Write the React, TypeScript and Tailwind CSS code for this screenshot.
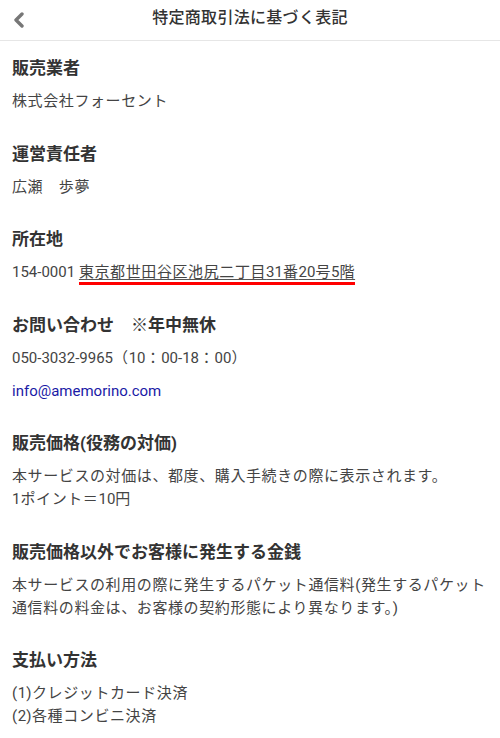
import React from 'react';

type Section = {
  title: string;
  lines: React.ReactNode[];
};

// latin runs keep normal tracking, CJK text is a touch wider in the reference
const L = ({ children }: { children: React.ReactNode }) => <span className="tracking-normal">{children}</span>;

const sections: Section[] = [
  { title: '販売業者', lines: ['株式会社フォーセント'] },
  { title: '運営責任者', lines: ['広瀬\u3000歩夢'] },
  {
    title: '所在地',
    lines: [
      <>
        <L>154-0001 </L>
        <span className="underline decoration-[#555] underline-offset-[2px] border-b-[3px] border-[#ff0000] pb-[1px]">
          東京都世田谷区池尻二丁目<L>31</L>番<L>20</L>号<L>5</L>階
        </span>
      </>,
    ],
  },
  {
    title: 'お問い合わせ\u3000※年中無休',
    lines: [
      <>
        <L>050-3032-9965</L>（<L>10</L>：<L>00-18</L>：<L>00</L>）
      </>,
      <a href="mailto:info@amemorino.com" className="text-[#1a1aa6] tracking-normal">
        info@amemorino.com
      </a>,
    ],
  },
  {
    title: '販売価格(役務の対価)',
    lines: [
      <>
        本サービスの対価は、都度、購入手続きの際に表示されます。
        <br />
        <L>1</L>ポイント＝<L>10</L>円
      </>,
    ],
  },
  {
    title: '販売価格以外でお客様に発生する金銭',
    lines: [
      '本サービスの利用の際に発生するパケット通信料(発生するパケット通信料の料金は、お客様の契約形態により異なります。)',
    ],
  },
  {
    title: '支払い方法',
    lines: [
      <>
        (<L>1</L>)クレジットカード決済
        <br />
        (<L>2</L>)各種コンビニ決済
      </>,
    ],
  },
];

export default function App() {
  return (
    <div
      className="min-h-screen bg-white text-[#444]"
      style={{ fontFamily: 'Roboto, "Noto Sans CJK JP", sans-serif' }}
    >
      {/* Header */}
      <div className="h-[41px] flex items-center relative border-b border-[#e6e6e6]">
        <button className="absolute left-[10px] top-[10px] w-[18px] h-[20px] flex items-center justify-center">
          <svg width="12" height="16" viewBox="0 0 12 16">
            <path d="M9 2 L3 8 L9 14" fill="none" stroke="#777" strokeWidth="3.4" strokeLinecap="round" strokeLinejoin="round" />
          </svg>
        </button>
        <h1 className="flex-1 text-center text-[16px] font-medium text-[#333] tracking-[0.3px] leading-[20px] pb-[4px]">
          特定商取引法に基づく表記
        </h1>
      </div>

      {/* Content */}
      <div className="px-[12px] pt-[15px] pb-[20px] flex flex-col gap-[28.5px]">
        {sections.map((s) => (
          <div key={s.title}>
            <h2 className="text-[17px] font-bold text-[#333] leading-[24px]">{s.title}</h2>
            {s.lines.map((l, i) => (
              <p key={i} className="mt-[10px] text-[15px] leading-[23px] tracking-[0.6px]">
                {l}
              </p>
            ))}
          </div>
        ))}
      </div>
    </div>
  );
}
